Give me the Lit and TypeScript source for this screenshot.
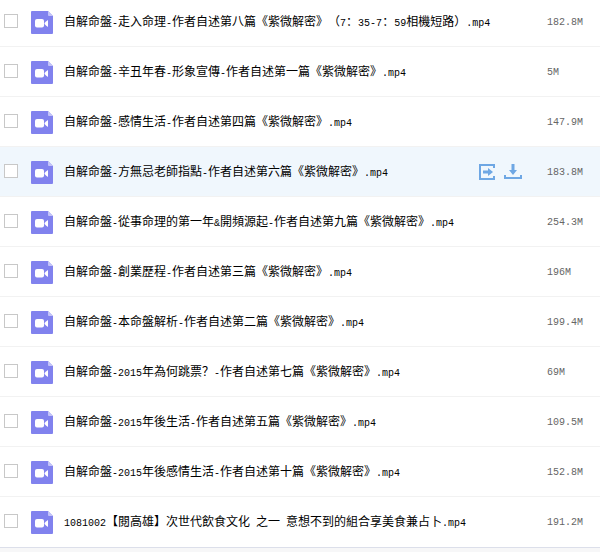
import { LitElement, html, css, svg } from "lit";
import { customElement } from "lit/decorators.js";
import { classMap } from "lit/directives/class-map.js";

interface FileItem {
  name: string;
  size: string;
  active?: boolean;
}

const files: FileItem[] = [
  { name: "自解命盤-走入命理-作者自述第八篇《紫微解密》（7：35-7：59相機短路）.mp4", size: "182.8M" },
  { name: "自解命盤-辛丑年春-形象宣傳-作者自述第一篇《紫微解密》.mp4", size: "5M" },
  { name: "自解命盤-感情生活-作者自述第四篇《紫微解密》.mp4", size: "147.9M" },
  { name: "自解命盤-方無忌老師指點-作者自述第六篇《紫微解密》.mp4", size: "183.8M", active: true },
  { name: "自解命盤-從事命理的第一年&開頻源起-作者自述第九篇《紫微解密》.mp4", size: "254.3M" },
  { name: "自解命盤-創業歷程-作者自述第三篇《紫微解密》.mp4", size: "196M" },
  { name: "自解命盤-本命盤解析-作者自述第二篇《紫微解密》.mp4", size: "199.4M" },
  { name: "自解命盤-2015年為何跳票？-作者自述第七篇《紫微解密》.mp4", size: "69M" },
  { name: "自解命盤-2015年後生活-作者自述第五篇《紫微解密》.mp4", size: "109.5M" },
  { name: "自解命盤-2015年後感情生活-作者自述第十篇《紫微解密》.mp4", size: "152.8M" },
  { name: "1081002【閱高雄】次世代飲食文化 之一 意想不到的組合享美食兼占卜.mp4", size: "191.2M" },
];

// Half-width runs are set in a monospaced face, half as wide as an ideograph.
const mixed = (text: string) =>
  text
    .split(/([\x20-\x7e]+)/)
    .filter(Boolean)
    .map((run) => (/^[\x20-\x7e]/.test(run) ? html`<span class="half">${run}</span>` : run));

const videoIcon = html`<svg class="file-icon" viewBox="0 0 22 23" aria-hidden="true">
  ${svg`<path d="M1 0H17L22 5V22Q22 23 21 23H1Q0 23 0 22V1Q0 0 1 0Z" fill="#8182ee"/>
  <path d="M17 0L22 5H18Q17 5 17 4Z" fill="#c4c5f8"/>
  <rect x="4" y="8" width="9" height="8.5" rx="2" fill="#fff"/>
  <path d="M13.5 12L15 10.5L17 9V16L15 14.5L13.5 13Z" fill="#fff"/>`}
</svg>`;

const shareIcon = html`<svg class="action-icon" viewBox="0 0 18 18" aria-hidden="true">
  ${svg`<path d="M16 5V2H2V16H16V13" fill="none" stroke="#6ea7e4" stroke-width="2"/>
  <path d="M5 7.5H10V5L15 9L10 13V10.5H5Z" fill="#6ea7e4"/>`}
</svg>`;

const downloadIcon = html`<svg class="action-icon" viewBox="0 0 18 18" aria-hidden="true">
  ${svg`<path d="M1 12V15H17V12" fill="none" stroke="#6ea7e4" stroke-width="2"/>
  <path d="M7.5 1H10.5V7H13L9 12L5 7H7.5Z" fill="#6ea7e4"/>`}
</svg>`;

@customElement("app-root")
export class AppRoot extends LitElement {
  static styles = css`
    :host {
      display: block;
      min-height: 100vh;
      background: #f7f7f8;
      font-family: "Noto Sans CJK SC", sans-serif;
      font-size: 12px;
      line-height: 18px;
      text-spacing-trim: space-all;
      color: #000;
    }
    .list {
      margin: 0;
      padding: 0 0 1px;
      list-style: none;
      background: #fff;
      border-bottom: 1px solid #dcdfea;
    }
    .row {
      display: flex;
      align-items: center;
      box-sizing: border-box;
      height: 50px;
      padding: 0 4px 1px;
      border-top: 1px solid #f2f2f2;
    }
    .row:first-child {
      height: 46px;
      padding-bottom: 4px;
      border-top: 0;
    }
    .row.active {
      background: #f0f7fd;
    }
    .check {
      appearance: none;
      box-sizing: border-box;
      flex: none;
      width: 14px;
      height: 14px;
      margin: 0 13px 0 0;
      border: 1px solid #c8c8c8;
      background: #fff;
    }
    .check:checked {
      background: #8182ee;
    }
    .label {
      display: flex;
      align-items: center;
      flex: 1;
      min-width: 0;
      gap: 11px;
      white-space: pre;
    }
    .file-icon {
      flex: none;
      width: 22px;
      height: 23px;
      padding-top: 3px;
    }
    .name {
      padding-top: 2px;
    }
    .half {
      font-family: "Liberation Mono", monospace;
      font-size: 10px;
    }
    .actions {
      display: flex;
      gap: 8px;
      margin-right: 25px;
      padding-top: 2px;
    }
    .action {
      display: block;
      padding: 0;
      border: 0;
      background: none;
      cursor: pointer;
    }
    .action-icon {
      display: block;
      width: 18px;
      height: 18px;
    }
    .size {
      flex: none;
      width: 49px;
      color: #666;
    }
  `;

  render() {
    return html`<ul class="list">
      ${files.map(
        (file, i) => html`<li class=${classMap({ row: true, active: !!file.active })}>
          <input class="check" type="checkbox" id="file-${i}" />
          <label class="label" for="file-${i}">${videoIcon}<span class="name">${mixed(file.name)}</span></label>
          ${file.active
            ? html`<div class="actions">
                <button class="action" type="button" aria-label="分享">${shareIcon}</button>
                <button class="action" type="button" aria-label="下載">${downloadIcon}</button>
              </div>`
            : null}
          <span class="size">${mixed(file.size)}</span>
        </li>`,
      )}
    </ul>`;
  }
}
